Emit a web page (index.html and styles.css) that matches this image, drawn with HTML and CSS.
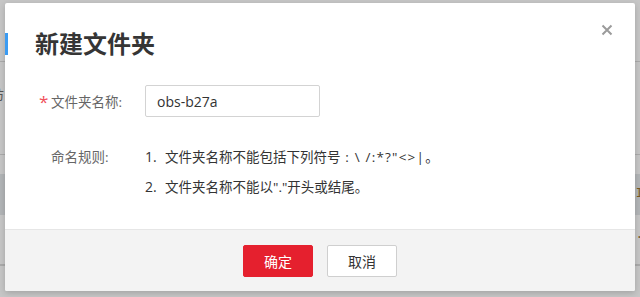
FILE: index.html
```html
<!DOCTYPE html>
<html lang="zh-CN">
<head>
    <meta charset="UTF-8">
    <meta name="viewport" content="width=device-width, initial-scale=1.0">
    <link rel="stylesheet" href="styles.css">
</head>
<body>
    <div class="page">
        <div class="page-tabs"></div>
        <div class="page-row page-row-tall"><span class="page-text">访</span></div>
        <div class="page-row page-row-gap"></div>
        <div class="page-head"><span class="page-mark">I</span></div>
        <div class="page-row page-row-body"><span class="page-mark">.</span></div>
        <div class="page-row"></div>
    </div>

    <div class="mask">
        <div class="dialog">
            <span class="dialog-tab"></span>
            <button class="dialog-close" title="关闭">
                <svg width="12" height="12" viewBox="0 0 12 12">
                    <path d="M1.5 1.5L10.5 10.5M10.5 1.5L1.5 10.5" stroke="#9b9b9b" stroke-width="2" fill="none"/>
                </svg>
            </button>
            <div class="dialog-body">
                <h1 class="dialog-title">新建文件夹</h1>
                <div class="field">
                    <label class="field-label required" for="folderName">文件夹名称:</label>
                    <input type="text" id="folderName" class="field-input" value="obs-b27a">
                </div>
                <div class="field field-rules">
                    <span class="field-label">命名规则:</span>
                    <ol class="rules">
                        <li><span class="rule-no">1.</span>文件夹名称不能包括下列符号<span class="symbols"> : \ /:*?"&lt;&gt;|</span>。</li>
                        <li><span class="rule-no">2.</span>文件夹名称不能以"."开头或结尾。</li>
                    </ol>
                </div>
            </div>
            <div class="dialog-footer">
                <button class="btn btn-primary">确定</button>
                <button class="btn btn-default">取消</button>
            </div>
        </div>
    </div>
</body>
</html>
```

FILE: styles.css
```css
body {
    margin: 0;
    font-family: "Open Sans", "Noto Sans CJK SC", sans-serif;
    background-color: #c6c6c6;
    overflow: hidden;
}

/* page behind the mask */
.page {
    height: 297px;
}
.page-tabs {
    height: 61px;
    border-bottom: 1px solid #ababab;
}
.page-row {
    border-bottom: 1px solid #ababab;
}
.page-row-tall {
    height: 92px;
    position: relative;
}
.page-text {
    position: absolute;
    left: -9px;
    top: 22px;
    font-size: 13px;
    color: #555;
}
.page-row-gap {
    height: 19px;
    border-bottom: none;
}
.page-head {
    height: 41px;
    background-color: #b2b5b7;
    text-align: right;
    font-family: "Liberation Mono", monospace;
    font-size: 12px;
    line-height: 41px;
    color: #7a5a20;
}
.page-row-body {
    height: 49px;
    text-align: right;
    font-family: "Liberation Mono", monospace;
    font-size: 12px;
    line-height: 40px;
    color: #7a5a20;
}
.page-mark {
    margin-right: -3px;
}

/* dialog */
.mask {
    position: absolute;
    left: 0;
    top: 0;
    right: 0;
    bottom: 0;
}
.dialog {
    position: absolute;
    left: 5px;
    top: 3px;
    width: 630px;
    height: 288px;
    display: flex;
    flex-direction: column;
    background-color: #fff;
    border-radius: 2px;
    box-shadow: 0 2px 6px rgba(0, 0, 0, 0.18);
}
.dialog-tab {
    position: absolute;
    left: 0;
    top: 30px;
    width: 3px;
    height: 22px;
    background-color: #3b9bf2;
}
.dialog-close {
    position: absolute;
    top: 21px;
    right: 22px;
    padding: 0;
    border: none;
    background: none;
    cursor: pointer;
    line-height: 0;
}
.dialog-body {
    flex: 1;
    padding: 28px 30px 0 34px;
}
.dialog-title {
    margin: 0 0 30px -4px;
    font-family: "Noto Sans CJK SC", sans-serif;
    font-size: 24px;
    line-height: 24px;
    font-weight: bold;
    color: #353535;
}
.field {
    display: flex;
    align-items: center;
}
.field-label {
    width: 94px;
    padding-left: 12px;
    flex-shrink: 0;
    font-size: 13.5px;
    color: #666;
    position: relative;
}
.required::before {
    content: "*";
    position: absolute;
    left: 0;
    top: 1px;
    color: #f0505a;
    font-size: 17px;
    line-height: 20px;
}
.field-input {
    width: 175px;
    height: 32px;
    box-sizing: border-box;
    padding: 0 11px;
    border: 1px solid #d3d3d3;
    border-radius: 2px;
    font-family: "Open Sans", "Noto Sans CJK SC", sans-serif;
    font-size: 14px;
    color: #333;
    outline: none;
}
.field-rules {
    align-items: flex-start;
    margin-top: 25px;
}
.field-rules .field-label {
    line-height: 30px;
}
.rules {
    margin: 0;
    padding: 0;
    list-style: none;
    font-size: 13.5px;
    line-height: 30px;
    color: #333;
}
.rule-no {
    display: inline-block;
    width: 20px;
    font-size: 14px;
}
.symbols {
    letter-spacing: 1.2px;
}

.dialog-footer {
    height: 62px;
    display: flex;
    justify-content: center;
    align-items: flex-start;
    gap: 14px;
    padding-top: 15px;
    box-sizing: border-box;
    background-color: #f3f3f3;
    border-top: 1px solid #e6e6e6;
    border-radius: 0 0 2px 2px;
}
.btn {
    width: 70px;
    height: 32px;
    border-radius: 2px;
    font-family: "Noto Sans CJK SC", sans-serif;
    font-size: 14px;
    cursor: pointer;
}
.btn-primary {
    border: 1px solid #e5202e;
    background-color: #e5202e;
    color: #fff;
}
.btn-default {
    border: 1px solid #cfcfcf;
    background-color: #fff;
    color: #333;
}
```
